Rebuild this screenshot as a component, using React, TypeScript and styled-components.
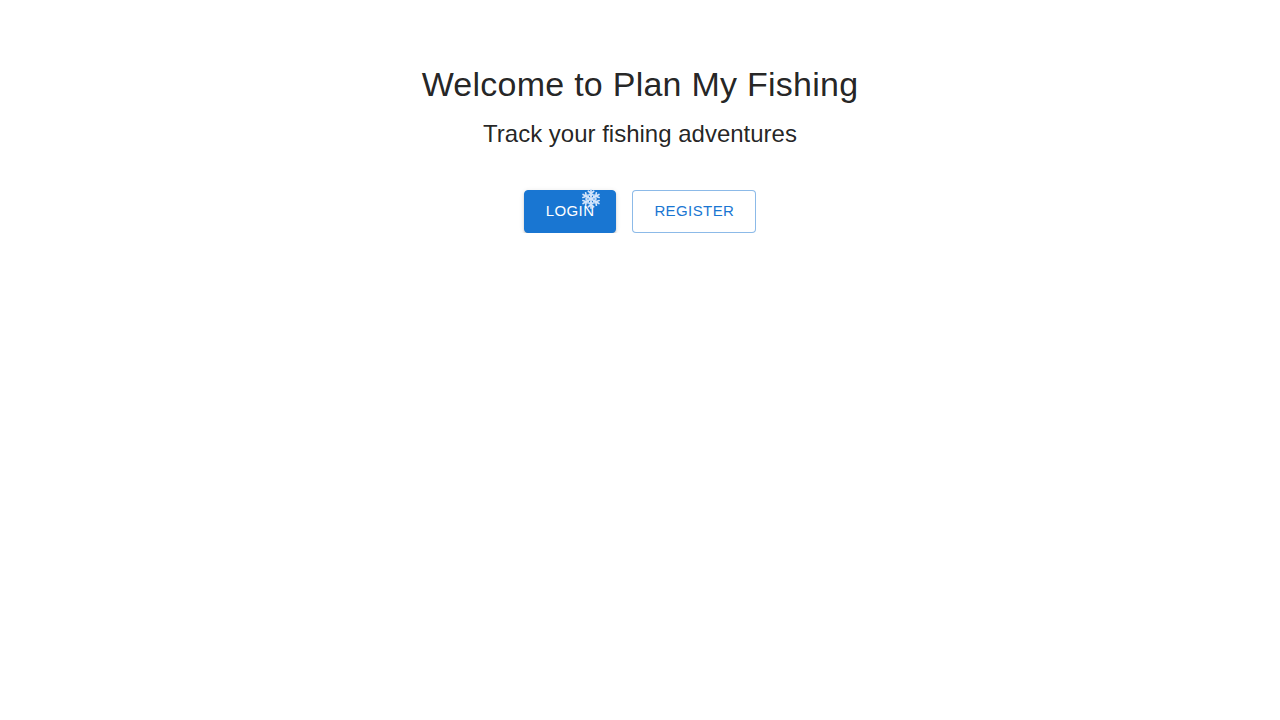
import React from "react";
import styled, { createGlobalStyle } from "styled-components";

const GlobalStyle = createGlobalStyle`
  html, body { margin: 0; padding: 0; background: #fff; }
  body { font-family: "Liberation Sans", Arial, sans-serif; }
`;

const Page = styled.main`
  display: flex;
  flex-direction: column;
  align-items: center;
  padding-top: 63px;
  font-family: "Liberation Sans", Arial, sans-serif;
`;

const Title = styled.h1`
  margin: 0 0 13px;
  font-size: 34px;
  font-weight: 400;
  line-height: 42px;
  letter-spacing: 0.25px;
  color: rgba(0, 0, 0, 0.87);
`;

const Subtitle = styled.h2`
  margin: 0;
  font-size: 24px;
  font-weight: 400;
  line-height: 32px;
  color: rgba(0, 0, 0, 0.87);
`;

const Actions = styled.div`
  display: flex;
  gap: 16px;
  margin-top: 40px;
`;

const Button = styled.button<{ $variant: "contained" | "outlined" }>`
  position: relative;
  box-sizing: border-box;
  height: 43px;
  padding: 0 21px 2px;
  border-radius: 4px;
  font-family: inherit;
  font-size: 15px;
  font-weight: 400;
  letter-spacing: 0.4px;
  text-transform: uppercase;
  cursor: pointer;
  color: ${(p) => (p.$variant === "contained" ? "#fff" : "#1976d2")};
  background: ${(p) => (p.$variant === "contained" ? "#1976d2" : "#fff")};
  border: 1px solid
    ${(p) => (p.$variant === "contained" ? "#1976d2" : "rgba(25, 118, 210, 0.5)")};
  box-shadow: ${(p) =>
    p.$variant === "contained"
      ? "0 3px 1px -2px rgba(0,0,0,0.2), 0 2px 2px 0 rgba(0,0,0,0.14), 0 1px 5px 0 rgba(0,0,0,0.12)"
      : "none"};
`;

const Flake = styled.svg`
  position: absolute;
  left: 55px;
  top: -3px;
  width: 22px;
  height: 22px;
  pointer-events: none;
`;

const arm = (
  <g>
    <line x1="12" y1="12" x2="12" y2="2" />
    <polyline points="9,3.5 12,6 15,3.5" />
    <polyline points="10,7 12,8.6 14,7" />
  </g>
);

const Snowflake = () => (
  <Flake viewBox="0 0 24 24" fill="none" stroke="#d4e5fb" strokeWidth="1.8" strokeLinecap="round" strokeLinejoin="round" aria-hidden="true">
    {[0, 60, 120, 180, 240, 300].map((a) => (
      <g key={a} transform={`rotate(${a} 12 12)`}>
        {arm}
      </g>
    ))}
  </Flake>
);

export default function App() {
  return (
    <>
      <GlobalStyle />
      <Page>
        <Title>Welcome to Plan My Fishing</Title>
        <Subtitle>Track your fishing adventures</Subtitle>
        <Actions>
          <Button $variant="contained">
            Login
            <Snowflake />
          </Button>
          <Button $variant="outlined">Register</Button>
        </Actions>
      </Page>
    </>
  );
}
